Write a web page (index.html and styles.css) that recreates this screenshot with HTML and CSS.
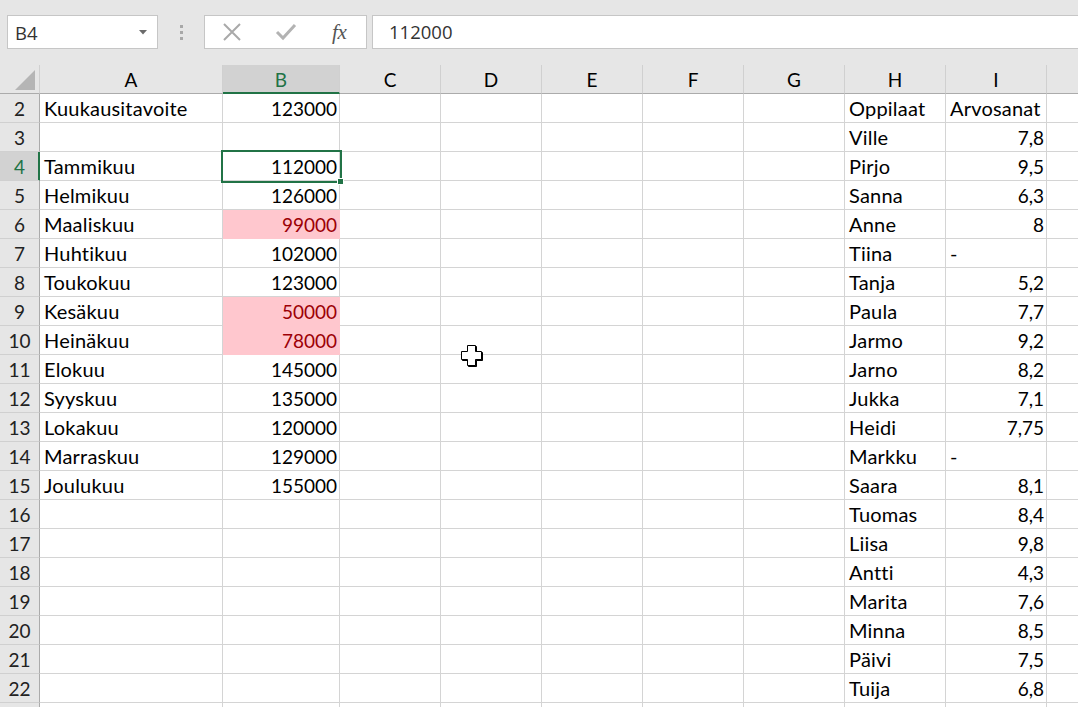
FILE: index.html
```html
<!DOCTYPE html>
<html lang="fi">
<head>
<meta charset="utf-8">
<title>Excel</title>
<link rel="stylesheet" href="styles.css">
</head>
<body>
<div class="toolbar">
  <div class="namebox"><span>B4</span><svg class="caret" width="8" height="5" viewBox="0 0 8 5"><polygon points="0,0 8,0 4,4.5" fill="#6b6b6b"/></svg></div>
  <div class="grip"><i></i><i></i><i></i></div>
  <div class="fxbtns">
    <div class="slot"><svg width="20" height="20" viewBox="0 0 20 20"><path d="M2 2 L18 18 M18 2 L2 18" stroke="#a9a9a9" stroke-width="2" fill="none"/></svg></div>
    <div class="slot"><svg width="22" height="18" viewBox="0 0 22 18"><polyline points="2,9 8,15 20,2" stroke="#b3b3b3" stroke-width="3" fill="none"/></svg></div>
    <div class="slot"><span class="fx">fx</span></div>
  </div>
  <div class="formula">112000</div>
</div>
<div class="sheet">
  <div class="row hrow">
    <div class="c corner"><svg width="20" height="20" viewBox="0 0 20 20"><polygon points="0,20 20,20 20,0" fill="#b5b5b5"/></svg></div>
    <div class="c h">A</div><div class="c h hsel">B</div><div class="c h">C</div><div class="c h">D</div><div class="c h">E</div><div class="c h">F</div><div class="c h">G</div><div class="c h">H</div><div class="c h">I</div><div class="c h"></div>
  </div>
  <div class="row"><div class="c rh">2</div><div class="c t">Kuukausitavoite</div><div class="c n">123000</div><div class="c"></div><div class="c"></div><div class="c"></div><div class="c"></div><div class="c"></div><div class="c t">Oppilaat</div><div class="c t">Arvosanat</div><div class="c"></div></div>
  <div class="row"><div class="c rh">3</div><div class="c"></div><div class="c n"></div><div class="c"></div><div class="c"></div><div class="c"></div><div class="c"></div><div class="c"></div><div class="c t">Ville</div><div class="c n">7,8</div><div class="c"></div></div>
  <div class="row"><div class="c rh rsel">4</div><div class="c t">Tammikuu</div><div class="c n sel">112000</div><div class="c"></div><div class="c"></div><div class="c"></div><div class="c"></div><div class="c"></div><div class="c t">Pirjo</div><div class="c n">9,5</div><div class="c"></div></div>
  <div class="row"><div class="c rh">5</div><div class="c t">Helmikuu</div><div class="c n">126000</div><div class="c"></div><div class="c"></div><div class="c"></div><div class="c"></div><div class="c"></div><div class="c t">Sanna</div><div class="c n">6,3</div><div class="c"></div></div>
  <div class="row"><div class="c rh">6</div><div class="c t">Maaliskuu</div><div class="c n bad">99000</div><div class="c"></div><div class="c"></div><div class="c"></div><div class="c"></div><div class="c"></div><div class="c t">Anne</div><div class="c n">8</div><div class="c"></div></div>
  <div class="row"><div class="c rh">7</div><div class="c t">Huhtikuu</div><div class="c n">102000</div><div class="c"></div><div class="c"></div><div class="c"></div><div class="c"></div><div class="c"></div><div class="c t">Tiina</div><div class="c t">-</div><div class="c"></div></div>
  <div class="row"><div class="c rh">8</div><div class="c t">Toukokuu</div><div class="c n">123000</div><div class="c"></div><div class="c"></div><div class="c"></div><div class="c"></div><div class="c"></div><div class="c t">Tanja</div><div class="c n">5,2</div><div class="c"></div></div>
  <div class="row"><div class="c rh">9</div><div class="c t">Kesäkuu</div><div class="c n bad">50000</div><div class="c"></div><div class="c"></div><div class="c"></div><div class="c"></div><div class="c"></div><div class="c t">Paula</div><div class="c n">7,7</div><div class="c"></div></div>
  <div class="row"><div class="c rh">10</div><div class="c t">Heinäkuu</div><div class="c n bad">78000</div><div class="c"></div><div class="c"></div><div class="c"></div><div class="c"></div><div class="c"></div><div class="c t">Jarmo</div><div class="c n">9,2</div><div class="c"></div></div>
  <div class="row"><div class="c rh">11</div><div class="c t">Elokuu</div><div class="c n">145000</div><div class="c"></div><div class="c"></div><div class="c"></div><div class="c"></div><div class="c"></div><div class="c t">Jarno</div><div class="c n">8,2</div><div class="c"></div></div>
  <div class="row"><div class="c rh">12</div><div class="c t">Syyskuu</div><div class="c n">135000</div><div class="c"></div><div class="c"></div><div class="c"></div><div class="c"></div><div class="c"></div><div class="c t">Jukka</div><div class="c n">7,1</div><div class="c"></div></div>
  <div class="row"><div class="c rh">13</div><div class="c t">Lokakuu</div><div class="c n">120000</div><div class="c"></div><div class="c"></div><div class="c"></div><div class="c"></div><div class="c"></div><div class="c t">Heidi</div><div class="c n">7,75</div><div class="c"></div></div>
  <div class="row"><div class="c rh">14</div><div class="c t">Marraskuu</div><div class="c n">129000</div><div class="c"></div><div class="c"></div><div class="c"></div><div class="c"></div><div class="c"></div><div class="c t">Markku</div><div class="c t">-</div><div class="c"></div></div>
  <div class="row"><div class="c rh">15</div><div class="c t">Joulukuu</div><div class="c n">155000</div><div class="c"></div><div class="c"></div><div class="c"></div><div class="c"></div><div class="c"></div><div class="c t">Saara</div><div class="c n">8,1</div><div class="c"></div></div>
  <div class="row"><div class="c rh">16</div><div class="c"></div><div class="c"></div><div class="c"></div><div class="c"></div><div class="c"></div><div class="c"></div><div class="c"></div><div class="c t">Tuomas</div><div class="c n">8,4</div><div class="c"></div></div>
  <div class="row"><div class="c rh">17</div><div class="c"></div><div class="c"></div><div class="c"></div><div class="c"></div><div class="c"></div><div class="c"></div><div class="c"></div><div class="c t">Liisa</div><div class="c n">9,8</div><div class="c"></div></div>
  <div class="row"><div class="c rh">18</div><div class="c"></div><div class="c"></div><div class="c"></div><div class="c"></div><div class="c"></div><div class="c"></div><div class="c"></div><div class="c t">Antti</div><div class="c n">4,3</div><div class="c"></div></div>
  <div class="row"><div class="c rh">19</div><div class="c"></div><div class="c"></div><div class="c"></div><div class="c"></div><div class="c"></div><div class="c"></div><div class="c"></div><div class="c t">Marita</div><div class="c n">7,6</div><div class="c"></div></div>
  <div class="row"><div class="c rh">20</div><div class="c"></div><div class="c"></div><div class="c"></div><div class="c"></div><div class="c"></div><div class="c"></div><div class="c"></div><div class="c t">Minna</div><div class="c n">8,5</div><div class="c"></div></div>
  <div class="row"><div class="c rh">21</div><div class="c"></div><div class="c"></div><div class="c"></div><div class="c"></div><div class="c"></div><div class="c"></div><div class="c"></div><div class="c t">Päivi</div><div class="c n">7,5</div><div class="c"></div></div>
  <div class="row"><div class="c rh">22</div><div class="c"></div><div class="c"></div><div class="c"></div><div class="c"></div><div class="c"></div><div class="c"></div><div class="c"></div><div class="c t">Tuija</div><div class="c n">6,8</div><div class="c"></div></div>
  <div class="row"><div class="c rh"></div><div class="c"></div><div class="c"></div><div class="c"></div><div class="c"></div><div class="c"></div><div class="c"></div><div class="c"></div><div class="c"></div><div class="c"></div><div class="c"></div></div>
  <svg class="cursor" width="23" height="23" viewBox="0 0 23 23">
    <path d="M7.5 1.5 H15.5 V7.5 H21.5 V15.5 H15.5 V21.5 H7.5 V15.5 H1.5 V7.5 H7.5 Z" fill="#000" stroke="#000" stroke-width="1"/>
    <path d="M6.5 0.5 H14.5 V6.5 H20.5 V14.5 H14.5 V20.5 H6.5 V14.5 H0.5 V6.5 H6.5 Z" fill="#fff" stroke="#000" stroke-width="1"/>
  </svg>
</div>
</body>
</html>
```
FILE: styles.css
```css
html, body {
  margin: 0;
  padding: 0;
  background: #ffffff;
}
body {
  width: 1078px;
  height: 707px;
  overflow: hidden;
  font-family: Lato, "Open Sans", sans-serif;
}
.toolbar {
  height: 65px;
  box-sizing: border-box;
  background: #e6e6e6;
  padding: 15px 0 0 7px;
  display: flex;
  align-items: flex-start;
}
.namebox {
  width: 151px;
  height: 34px;
  box-sizing: border-box;
  border: 1px solid #c6c6c6;
  background: #fff;
  display: flex;
  align-items: center;
  justify-content: space-between;
  padding: 0 10px 0 7px;
  font-family: "Open Sans", sans-serif;
  font-size: 18.5px;
  color: #333;
}
.caret { margin-top: 1px; }
.grip {
  width: 46px;
  height: 34px;
  display: flex;
  flex-direction: column;
  align-items: center;
  justify-content: center;
  gap: 3px;
}
.grip i {
  display: block;
  width: 3px;
  height: 3px;
  background: #a8a8a8;
}
.fxbtns {
  width: 163px;
  height: 34px;
  box-sizing: border-box;
  border: 1px solid #c6c6c6;
  background: #fff;
  display: flex;
  align-items: center;
}
.slot {
  width: 54px;
  height: 32px;
  display: flex;
  align-items: center;
  justify-content: center;
}
.fx {
  font-family: "Liberation Serif", serif;
  font-style: italic;
  font-size: 21px;
  color: #555;
  letter-spacing: -0.5px;
}
.formula {
  flex: 1;
  margin-left: 5px;
  height: 34px;
  box-sizing: border-box;
  border: 1px solid #c6c6c6;
  border-right: none;
  background: #fff;
  padding-left: 16px;
  font-family: "Open Sans", sans-serif;
  font-size: 18.5px;
  line-height: 32px;
  color: #333;
}
.sheet {
  position: relative;
  width: 1078px;
  height: 642px;
  overflow: hidden;
}
.row {
  display: grid;
  grid-template-columns: 40px 183px 117px repeat(8, 101px);
}
.c {
  height: 29px;
  box-sizing: border-box;
  border-right: 1px solid #d4d4d4;
  border-bottom: 1px solid #d4d4d4;
  font-size: 19px;
  line-height: 30px;
  padding: 0 2px 0 4px;
  white-space: nowrap;
  overflow: hidden;
  color: #000;
}
.t {
  font-size: 20px;
  line-height: 29px;
  letter-spacing: 0.2px;
}
.n { text-align: right; }
.hrow .c {
  background: #e6e6e6;
  border-right-color: #d0d0d0;
  border-bottom-color: #ababab;
}
.h { text-align: center; padding: 0; }
.hsel {
  background: #d2d2d2 !important;
  color: #217346;
  border-bottom: 2px solid #217346 !important;
}
.corner {
  padding: 0;
  position: relative;
}
.corner svg {
  position: absolute;
  left: 15px;
  top: 5px;
}
.rh {
  background: #e6e6e6;
  border-right-color: #ababab;
  border-bottom-color: #d0d0d0;
  text-align: center;
  padding: 0;
  color: #222;
}
.rsel {
  background: #d2d2d2;
  color: #217346;
  border-right-color: #217346;
  box-shadow: inset -1px 0 0 #217346;
}
.bad {
  background: #ffc7ce;
  color: #9c0006;
  border-color: #ffc7ce;
}
.sel {
  position: relative;
  overflow: visible;
}
.sel::after {
  content: "";
  position: absolute;
  left: -2px;
  top: -2px;
  right: -3px;
  bottom: -3px;
  border: 2px solid #217346;
  z-index: 2;
}
.sel::before {
  content: "";
  position: absolute;
  right: -5px;
  bottom: -5px;
  width: 5px;
  height: 5px;
  background: #217346;
  border: 1px solid #fff;
  z-index: 3;
}
.cursor {
  position: absolute;
  left: 461px;
  top: 280px;
  z-index: 5;
}
```
